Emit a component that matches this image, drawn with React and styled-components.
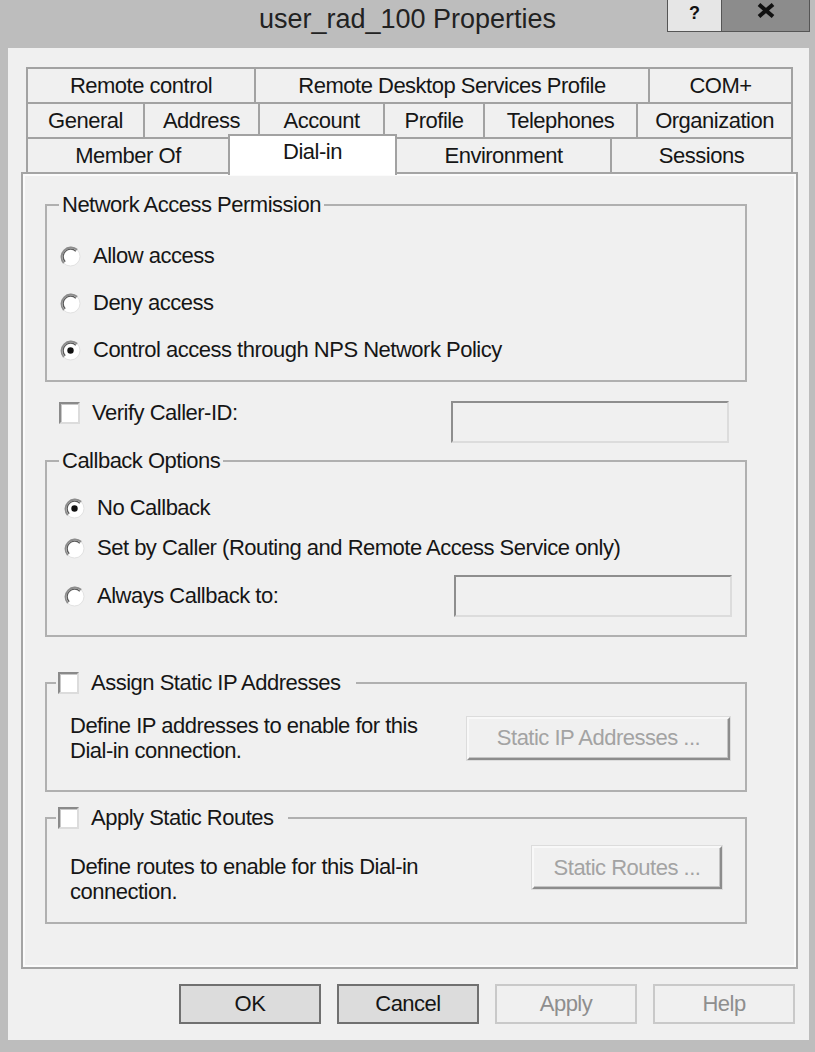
import React from 'react';
import styled, { createGlobalStyle } from 'styled-components';

const Global = createGlobalStyle`
  html, body { margin: 0; padding: 0; background: #bdbdbd; }
  body { font-family: "Liberation Sans", Arial, sans-serif; color: #161616; }
  #root { width: 815px; height: 1052px; }
`;

const Window = styled.div`
  width: 815px;
  height: 1052px;
  box-sizing: border-box;
  background: #bdbdbd;
  display: flex;
  flex-direction: column;
`;

const TitleBar = styled.div`
  height: 48px;
  flex: none;
  display: grid;
  grid-template-columns: 1fr auto 1fr;
`;

const TitleText = styled.div`
  grid-column: 2;
  padding-top: 4px;
  line-height: 30px;
  font-size: 27px;
  color: #222;
`;

const CaptionButtons = styled.div`
  grid-column: 3;
  justify-self: end;
  align-self: start;
  display: flex;
  margin-right: 5px;
`;

const CaptionButton = styled.div`
  width: ${p => p.$w}px;
  height: 32px;
  box-sizing: border-box;
  background: ${p => p.$bg};
  border: 1px solid #555;
  border-top: none;
  margin-left: -1px;
  display: flex;
  justify-content: center;
  align-items: flex-start;
  padding-top: ${p => p.$pt}px;
  font-weight: bold;
  font-size: 18px;
  line-height: 18px;
  color: #111;
`;

const Client = styled.div`
  flex: 1;
  margin: 0 6px 12px 8px;
  background: #f0f0f0;
  padding: 19px 11px 16px 13px;
  display: flex;
  flex-direction: column;
`;

const TabStrip = styled.div`
  margin: 0 5px;
  display: flex;
  flex-direction: column;
`;

const TabRow = styled.div`
  display: flex;
  height: 35px;
`;

const Tab = styled.div`
  flex: 0 0 ${p => p.$w}px;
  height: 35px;
  box-sizing: border-box;
  border-top: 2px solid #a2a2a2;
  border-left: 2px solid #a2a2a2;
  &:last-child { border-right: 2px solid #a2a2a2; }
  background: #f0f0f0;
  display: flex;
  align-items: center;
  justify-content: center;
  font-size: 22px;
  letter-spacing: -0.5px;
  line-height: 26px;
  color: #161616;
`;

const ActiveTab = styled.div`
  flex: 0 0 ${p => p.$w}px;
  height: 41px;
  margin: -3px -2px -3px 0;
  position: relative;
  z-index: 1;
  box-sizing: border-box;
  border: 2px solid #a2a2a2;
  border-bottom: none;
  background: #ffffff;
  display: flex;
  justify-content: center;
  padding-top: 3px;
  font-size: 22px;
  letter-spacing: -0.5px;
  line-height: 26px;
  color: #161616;
`;

const Panel = styled.div`
  height: 797px;
  box-sizing: border-box;
  border: 2px solid #a4a4a4;
  box-shadow: inset 0 0 0 2px #fbfbfb;
  background: #f0f0f0;
  padding: 18px 49px 0 22px;
  display: flex;
  flex-direction: column;
  font-size: 22px;
  letter-spacing: -0.5px;
  line-height: 26px;
`;

const Group = styled.fieldset`
  margin: ${p => p.$mt || 0}px 0 0 0;
  padding: ${p => p.$pad};
  border: 2px solid #b0b0b0;
  min-width: 0;
  display: flex;
  flex-direction: column;
  gap: ${p => p.$gap || 0}px;
`;

const Legend = styled.legend`
  margin-left: ${p => p.$ml}px;
  padding: 0 ${p => p.$pr}px 0 ${p => p.$pl}px;
  line-height: 26px;
  height: 26px;
  display: flex;
  align-items: center;
  gap: 12px;
`;

const OptionRow = styled.div`
  display: flex;
  align-items: center;
  gap: ${p => p.$gap || 12}px;
  padding-right: ${p => p.$pr || 0}px;
  min-height: 26px;
`;

const RadioSvg = styled.svg`
  flex: none;
  display: block;
`;

const Radio = ({ checked }) => (
  <RadioSvg viewBox="0 0 21 21" width="21" height="21">
    <circle cx="10.5" cy="10.5" r="9.5" fill="#ffffff" stroke="#e2e2e2" strokeWidth="1" />
    <path d="M3.8 17.2 A9.5 9.5 0 0 1 17.2 3.8" fill="none" stroke="#8c8c8c" strokeWidth="1.8" />
    <path d="M5.2 15.8 A7.5 7.5 0 0 1 15.8 5.2" fill="none" stroke="#5a5a5a" strokeWidth="1.3" />
    {checked && <circle cx="10.5" cy="10.5" r="3.2" fill="#111" />}
  </RadioSvg>
);

const CheckBox = styled.span`
  flex: none;
  width: 21px;
  height: 22px;
  box-sizing: border-box;
  background: #ffffff;
  border: 2px solid;
  border-color: #8a8a8a #dcdcdc #dcdcdc #8a8a8a;
  box-shadow: inset 1px 1px 0 #c8c8c8;
`;

const Spacer = styled.div`
  flex: 1;
`;

const TextField = styled.div`
  flex: none;
  width: ${p => p.$w}px;
  height: 42px;
  margin-top: ${p => p.$mt || 0}px;
  box-sizing: border-box;
  background: #f0f0f0;
  border: 2px solid;
  border-color: #8e8e8e #dcdcdc #dcdcdc #8e8e8e;
`;

const VerifyRow = styled.div`
  margin-top: 18px;
  display: flex;
  align-items: flex-start;
  padding: 0 18px 0 14px;
`;

const LabelCluster = styled.div`
  display: flex;
  align-items: center;
  gap: 12px;
  height: 26px;
`;

const DescRow = styled.div`
  display: flex;
  align-items: ${p => p.$align};
  padding: 0 ${p => p.$pr}px 0 23px;
`;

const DescText = styled.div`
  line-height: 25px;
  margin-top: ${p => p.$mt || 0}px;
`;

const RaisedButton = styled.div`
  flex: none;
  width: ${p => p.$w}px;
  height: 43px;
  box-sizing: border-box;
  background: #f0f0f0;
  border: 2px solid;
  border-color: #f8f8f8 #8c8c8c #8c8c8c #f8f8f8;
  box-shadow: inset -1px -1px 0 #c4c4c4, 0 0 0 1px #dcdcdc;
  color: #a3a3a3;
  display: flex;
  align-items: center;
  justify-content: center;
`;

const ButtonRow = styled.div`
  margin-top: 15px;
  display: flex;
  justify-content: flex-end;
  gap: 16px;
  padding-right: 3px;
`;

const DialogButton = styled.div`
  width: 142px;
  height: 40px;
  box-sizing: border-box;
  background: ${p => (p.$disabled ? '#f0f0f0' : '#dcdcdc')};
  border: 2px solid ${p => (p.$disabled ? '#c9c9c9' : '#707070')};
  color: ${p => (p.$disabled ? '#8e8e8e' : '#151515')};
  display: flex;
  align-items: center;
  justify-content: center;
  font-size: 22px;
  letter-spacing: -0.5px;
`;

const CloseIcon = () => (
  <svg width="18" height="15" viewBox="0 0 18 15">
    <path d="M2 1.5 L16 13.5 M16 1.5 L2 13.5" stroke="#111" strokeWidth="4" strokeLinecap="butt" />
  </svg>
);

const row1 = [['Remote control', 228], ['Remote Desktop Services Profile', 394], ['COM+', 145]];
const row2 = [['General', 117], ['Address', 115], ['Account', 125], ['Profile', 100], ['Telephones', 153], ['Organization', 157]];

export default function App() {
  return (
    <>
      <Global />
      <Window>
        <TitleBar>
          <TitleText>user_rad_100 Properties</TitleText>
          <CaptionButtons>
            <CaptionButton $w={55} $bg="#e6e6e6" $pt={4}>?</CaptionButton>
            <CaptionButton $w={89} $bg="#8c8c8c" $pt={3}><CloseIcon /></CaptionButton>
          </CaptionButtons>
        </TitleBar>
        <Client>
          <TabStrip>
            <TabRow>
              {row1.map(([t, w]) => <Tab key={t} $w={w}>{t}</Tab>)}
            </TabRow>
            <TabRow>
              {row2.map(([t, w]) => <Tab key={t} $w={w}>{t}</Tab>)}
            </TabRow>
            <TabRow>
              <Tab $w={202}>Member Of</Tab>
              <ActiveTab $w={169}>Dial-in</ActiveTab>
              <Tab $w={215}>Environment</Tab>
              <Tab $w={183}>Sessions</Tab>
            </TabRow>
          </TabStrip>
          <Panel>
            <Group $pad="25px 0 17px 13px" $gap={21}>
              <Legend $ml={-1} $pl={3} $pr={3}>Network Access Permission</Legend>
              <OptionRow><Radio /><span>Allow access</span></OptionRow>
              <OptionRow><Radio /><span>Deny access</span></OptionRow>
              <OptionRow><Radio checked /><span>Control access through NPS Network Policy</span></OptionRow>
            </Group>

            <VerifyRow>
              <LabelCluster><CheckBox /><span>Verify Caller-ID:</span></LabelCluster>
              <Spacer />
              <TextField $w={278} $mt={1} />
            </VerifyRow>

            <Group $mt={5} $pad="21px 0 18px 17px" $gap={14}>
              <Legend $ml={-5} $pl={3} $pr={3}>Callback Options</Legend>
              <OptionRow><Radio checked /><span>No Callback</span></OptionRow>
              <OptionRow><Radio /><span>Set by Caller (Routing and Remote Access Service only)</span></OptionRow>
              <OptionRow $pr={13}><Radio /><span>Always Callback to:</span><Spacer /><TextField $w={278} /></OptionRow>
            </Group>

            <Group $mt={33} $pad="17px 0 27px 0">
              <Legend $ml={9} $pl={2} $pr={15}><CheckBox /><span>Assign Static IP Addresses</span></Legend>
              <DescRow $align="center" $pr={15}>
                <DescText>Define IP addresses to enable for this<br />Dial-in connection.</DescText>
                <Spacer />
                <RaisedButton $w={263}>Static IP Addresses ...</RaisedButton>
              </DescRow>
            </Group>

            <Group $mt={13} $pad="15px 0 18px 0">
              <Legend $ml={9} $pl={2} $pr={15}><CheckBox /><span>Apply Static Routes</span></Legend>
              <DescRow $align="flex-start" $pr={23}>
                <DescText $mt={8}>Define routes to enable for this Dial-in<br />connection.</DescText>
                <Spacer />
                <RaisedButton $w={190}>Static Routes ...</RaisedButton>
              </DescRow>
            </Group>
          </Panel>
          <ButtonRow>
            <DialogButton>OK</DialogButton>
            <DialogButton>Cancel</DialogButton>
            <DialogButton $disabled>Apply</DialogButton>
            <DialogButton $disabled>Help</DialogButton>
          </ButtonRow>
        </Client>
      </Window>
    </>
  );
}
